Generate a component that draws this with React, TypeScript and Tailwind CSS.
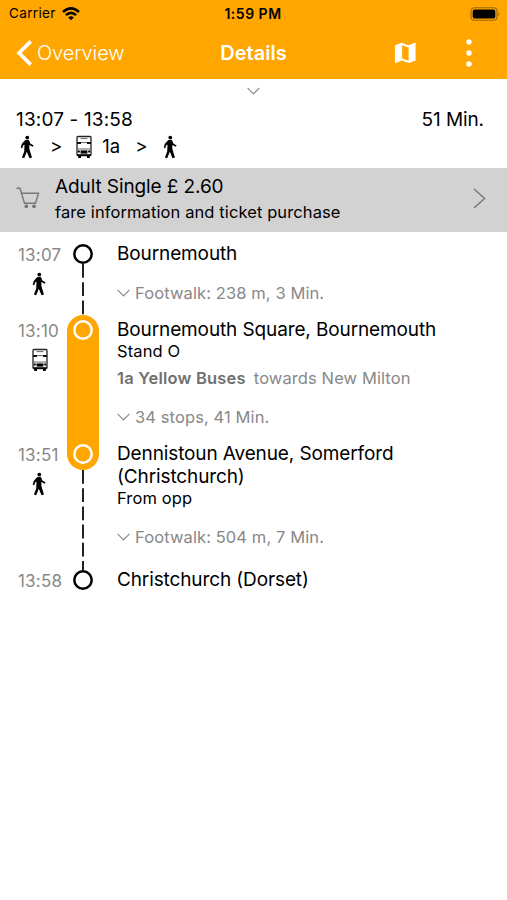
import React from "react";
import clsx from "clsx";

type Mode = "walk" | "bus";

type Stop = {
  time: string;
  name: string[];
  platform?: string;
  mode?: Mode;
  line?: string;
  direction?: string;
  summary?: string;
  height: string;
};

const STOPS: Stop[] = [
  {
    time: "13:07",
    name: ["Bournemouth"],
    mode: "walk",
    summary: "Footwalk: 238 m, 3 Min.",
    height: "h-[76px] pb-[10px]",
  },
  {
    time: "13:10",
    name: ["Bournemouth Square, Bournemouth"],
    platform: "Stand O",
    mode: "bus",
    line: "1a Yellow Buses",
    direction: "towards New Milton",
    summary: "34 stops, 41 Min.",
    height: "h-[124px] pb-[10px]",
  },
  {
    time: "13:51",
    name: ["Dennistoun Avenue, Somerford", "(Christchurch)"],
    platform: "From opp",
    mode: "walk",
    summary: "Footwalk: 504 m, 7 Min.",
    height: "h-[126px] pb-[16px]",
  },
  {
    time: "13:58",
    name: ["Christchurch (Dorset)"],
    height: "h-[40px]",
  },
];

function WalkIcon() {
  return (
    <svg width="14" height="24" viewBox="0 0 14 24" className="shrink-0">
      <circle cx="7.3" cy="2.6" r="1.9" />
      <path d="M5.3 4.9 H8.9 L10.4 8.4 L13.6 10.6 L12.8 11.8 L9.4 9.9 L9.3 13.6 L10.4 17.5 L12 22.5 L9.5 23.2 L6.8 16.8 L4.2 23.2 L1.9 22.6 L4.2 16.5 L4.5 9.4 L3.1 10.4 L2.3 13.2 L0.8 12.8 L1.7 9 Z" />
    </svg>
  );
}

function BusIcon() {
  return (
    <svg width="16" height="24" viewBox="0 0 16 24" className="shrink-0">
      <rect x="1" y="1.5" width="14" height="19" rx="1" fill="none" stroke="#222" strokeWidth="1.3" />
      <path d="M1 8h4M11 8h4" stroke="#111" strokeWidth="2" />
      <path d="M4.6 3.6h6.8M5 7.6h6M2 14h12" stroke="#555" strokeWidth="0.9" />
      <path d="M4.6 15.4h6.8v3.2H4.6z" />
      <path d="M1.8 15.6h2v2H1.8zM12.2 15.6h2v2h-2zM1 19.2h14v1.6H1z" />
      <path d="M2.2 20h2.8v3H2.2zM11 20h2.8v3H11z" />
    </svg>
  );
}

function Chevron({ className }: { className?: string }) {
  return (
    <svg
      width="13"
      height="8"
      viewBox="0 0 13 8"
      fill="none"
      stroke="currentColor"
      strokeWidth="1.1"
      className={clsx("shrink-0", className)}
    >
      <path d="M0.6 0.8 L6.5 6.9 L12.4 0.8" />
    </svg>
  );
}

function StatusBar() {
  return (
    <div className="grid h-[27px] grid-cols-3 items-center pl-[9px] pr-[6px] text-[13.5px]">
      <div className="flex items-center gap-[6px]">
        <span className="tracking-[0.35px]">Carrier</span>
        <svg width="18" height="14" viewBox="0 0 18 14" fill="none" stroke="#000" strokeWidth="2.5">
          <path d="M1 5 Q9 -2.2 17 5" />
          <path d="M3.9 8.1 Q9 3.6 14.1 8.1" />
          <path d="M6.2 10.4 Q9 8.1 11.8 10.4 L9 13.3 Z" fill="#000" stroke="none" />
        </svg>
      </div>
      <div className="whitespace-nowrap pr-1 text-center text-[14px] font-semibold tracking-[0.5px]">1:59 PM</div>
      <svg width="31" height="14" viewBox="0 0 31 14" className="justify-self-end">
        <rect x="1" y="0.7" width="26" height="12.6" rx="3.5" fill="none" stroke="#9b6a08" strokeWidth="1.1" />
        <rect x="2.7" y="2.4" width="22.6" height="9.2" rx="2" />
        <path d="M28.4 4.8q2 2.2 0 4.4z" fill="#9b6a08" />
      </svg>
    </div>
  );
}

function NavBar() {
  return (
    <div className="grid h-[52px] grid-cols-3 items-center pb-px pl-4 pr-[35px] text-white">
      <div className="flex items-center gap-1">
        <svg width="17" height="26" viewBox="0 0 17 26" fill="none" stroke="#fff" strokeWidth="3.6">
          <path d="M14.8 1.4 L3 13 L14.8 24.6" />
        </svg>
        <span className="text-[20px] font-light tracking-[-0.1px]">Overview</span>
      </div>
      <div className="pl-[19px] text-center text-[20px] font-semibold">Details</div>
      <div className="flex items-center justify-end gap-[50px]">
        <svg width="22" height="22" viewBox="0 0 22 22" fill="#fff">
          <path
            fillRule="evenodd"
            d="M.9 3.2 L7.6 .8 L14.7 3.2 L20.8 .8 Q21.6 .6 21.6 1.4 V18.4 L15.2 21 L7.8 18.5 L1.9 20.9 Q.9 21.2 .9 20.2 Z M8.1 3.2 V16.4 L14.6 18.7 V5.4 Z"
          />
        </svg>
        <svg width="6" height="28" viewBox="0 0 6 28" fill="#fff">
          <circle cx="3" cy="3" r="2.7" />
          <circle cx="3" cy="14" r="2.7" />
          <circle cx="3" cy="25" r="2.7" />
        </svg>
      </div>
    </div>
  );
}

function TripSummary() {
  return (
    <section className="h-[89px] pt-[8px]">
      <Chevron className="mx-auto text-[#888]" />
      <div className="mt-[13px] flex h-6 items-center justify-between pl-4 pr-[23px] text-[19px]">
        <span className="tracking-[0.15px]">13:07 - 13:58</span>
        <span className="tracking-[-0.1px]">51 Min.</span>
      </div>
      <div className="mt-[3px] flex h-6 items-center pl-5 text-[18.5px]">
        <WalkIcon />
        <span className="ml-4">&gt;</span>
        <span className="ml-[14px] flex items-center gap-[10px]">
          <BusIcon />
          1a
        </span>
        <span className="ml-[15px]">&gt;</span>
        <span className="ml-[16px]">
          <WalkIcon />
        </span>
      </div>
    </section>
  );
}

function FareRow() {
  return (
    <button className="flex h-[64px] w-full items-center bg-[#d2d2d2] pb-px pl-4 pr-[21px] text-left">
      <svg width="24" height="22" viewBox="0 0 24 22" fill="none" stroke="#777" strokeWidth="1.4" className="-mt-1 shrink-0">
        <path d="M.5 1.3 H4 L8.5 16.2 H19.5 L22.5 6.2 H5.6" />
        <circle cx="10.3" cy="19.3" r="1.2" fill="#555" />
        <circle cx="18" cy="19.3" r="1.2" fill="#555" />
      </svg>
      <span className="ml-[15px] flex-1">
        <span className="block text-[19px] leading-[26px] tracking-[-0.1px]">Adult Single £ 2.60</span>
        <span className="block text-[16.5px] leading-[25px] tracking-[0.1px]">
          fare information and ticket purchase
        </span>
      </span>
      <svg width="13" height="21" viewBox="0 0 13 21" fill="none" stroke="#777" strokeWidth="1.4" className="-mt-[2px]">
        <path d="M1 1 L11.6 10.5 L1 20" />
      </svg>
    </button>
  );
}

function StopRow({ stop }: { stop: Stop }) {
  const onBus = stop.time === "13:10" || stop.time === "13:51";

  return (
    <li className={clsx("flex", stop.height)}>
      <div className="flex w-[67px] flex-col pl-[18px] pt-[4px] text-[17px] leading-6 tracking-[0.2px] text-[#888]">
        <span>{stop.time}</span>
        <span className="ml-[14px] mt-[5px] text-black">
          {stop.mode === "walk" && <WalkIcon />}
          {stop.mode === "bus" && <BusIcon />}
        </span>
      </div>

      {/* rail */}
      <div className="relative flex w-8 flex-col items-center pt-[5px]">
        {stop.mode === "bus" && (
          <div className="absolute left-0 top-0 h-[155px] w-8 rounded-full bg-[#ffa600]" />
        )}
        <svg
          width="20"
          height="20"
          viewBox="0 0 20 20"
          strokeWidth="2.5"
          className={clsx("z-10 shrink-0", onBus ? "fill-none stroke-white" : "fill-white stroke-black")}
        >
          <circle cx="10" cy="10" r="8.7" />
        </svg>
        {stop.mode === "walk" && (
          <svg
            width="2"
            className={clsx("min-h-0 flex-1", onBus ? "-mb-[21px] mt-[6px]" : "-mb-[10px]")}
          >
            <line x1="1" y1="0" x2="1" y2="200" stroke="#222" strokeWidth="2" strokeDasharray="13.8 4.4" />
          </svg>
        )}
      </div>

      <div className="flex flex-1 flex-col pl-[18px] pt-[3px]">
        {stop.name.map((part) => (
          <p key={part} className="text-[19px] leading-[23px] tracking-[-0.12px]">
            {part}
          </p>
        ))}
        {stop.platform && (
          <p className="text-[16.5px] leading-[21px] tracking-[0.1px]">{stop.platform}</p>
        )}
        {stop.line && (
          <p className="mt-[6px] text-[16.5px] leading-[21px] tracking-[0.1px] text-[#888]">
            <span className="mr-2 font-semibold tracking-[0.2px] text-[#707070]">{stop.line}</span>
            {stop.direction}
          </p>
        )}
        {stop.summary && (
          <p className="mt-auto flex items-center gap-[5px] text-[16.5px] leading-6 tracking-[0.1px] text-[#888]">
            <Chevron />
            {stop.summary}
          </p>
        )}
      </div>
    </li>
  );
}

export default function App() {
  return (
    <main className="h-[900px] w-[507px] overflow-hidden bg-white font-['Inter',sans-serif] text-black">
      <header className="bg-[#ffa600]">
        <StatusBar />
        <NavBar />
      </header>
      <TripSummary />
      <FareRow />
      <ul className="pt-[7px]">
        {STOPS.map((stop) => (
          <StopRow key={stop.time} stop={stop} />
        ))}
      </ul>
    </main>
  );
}
